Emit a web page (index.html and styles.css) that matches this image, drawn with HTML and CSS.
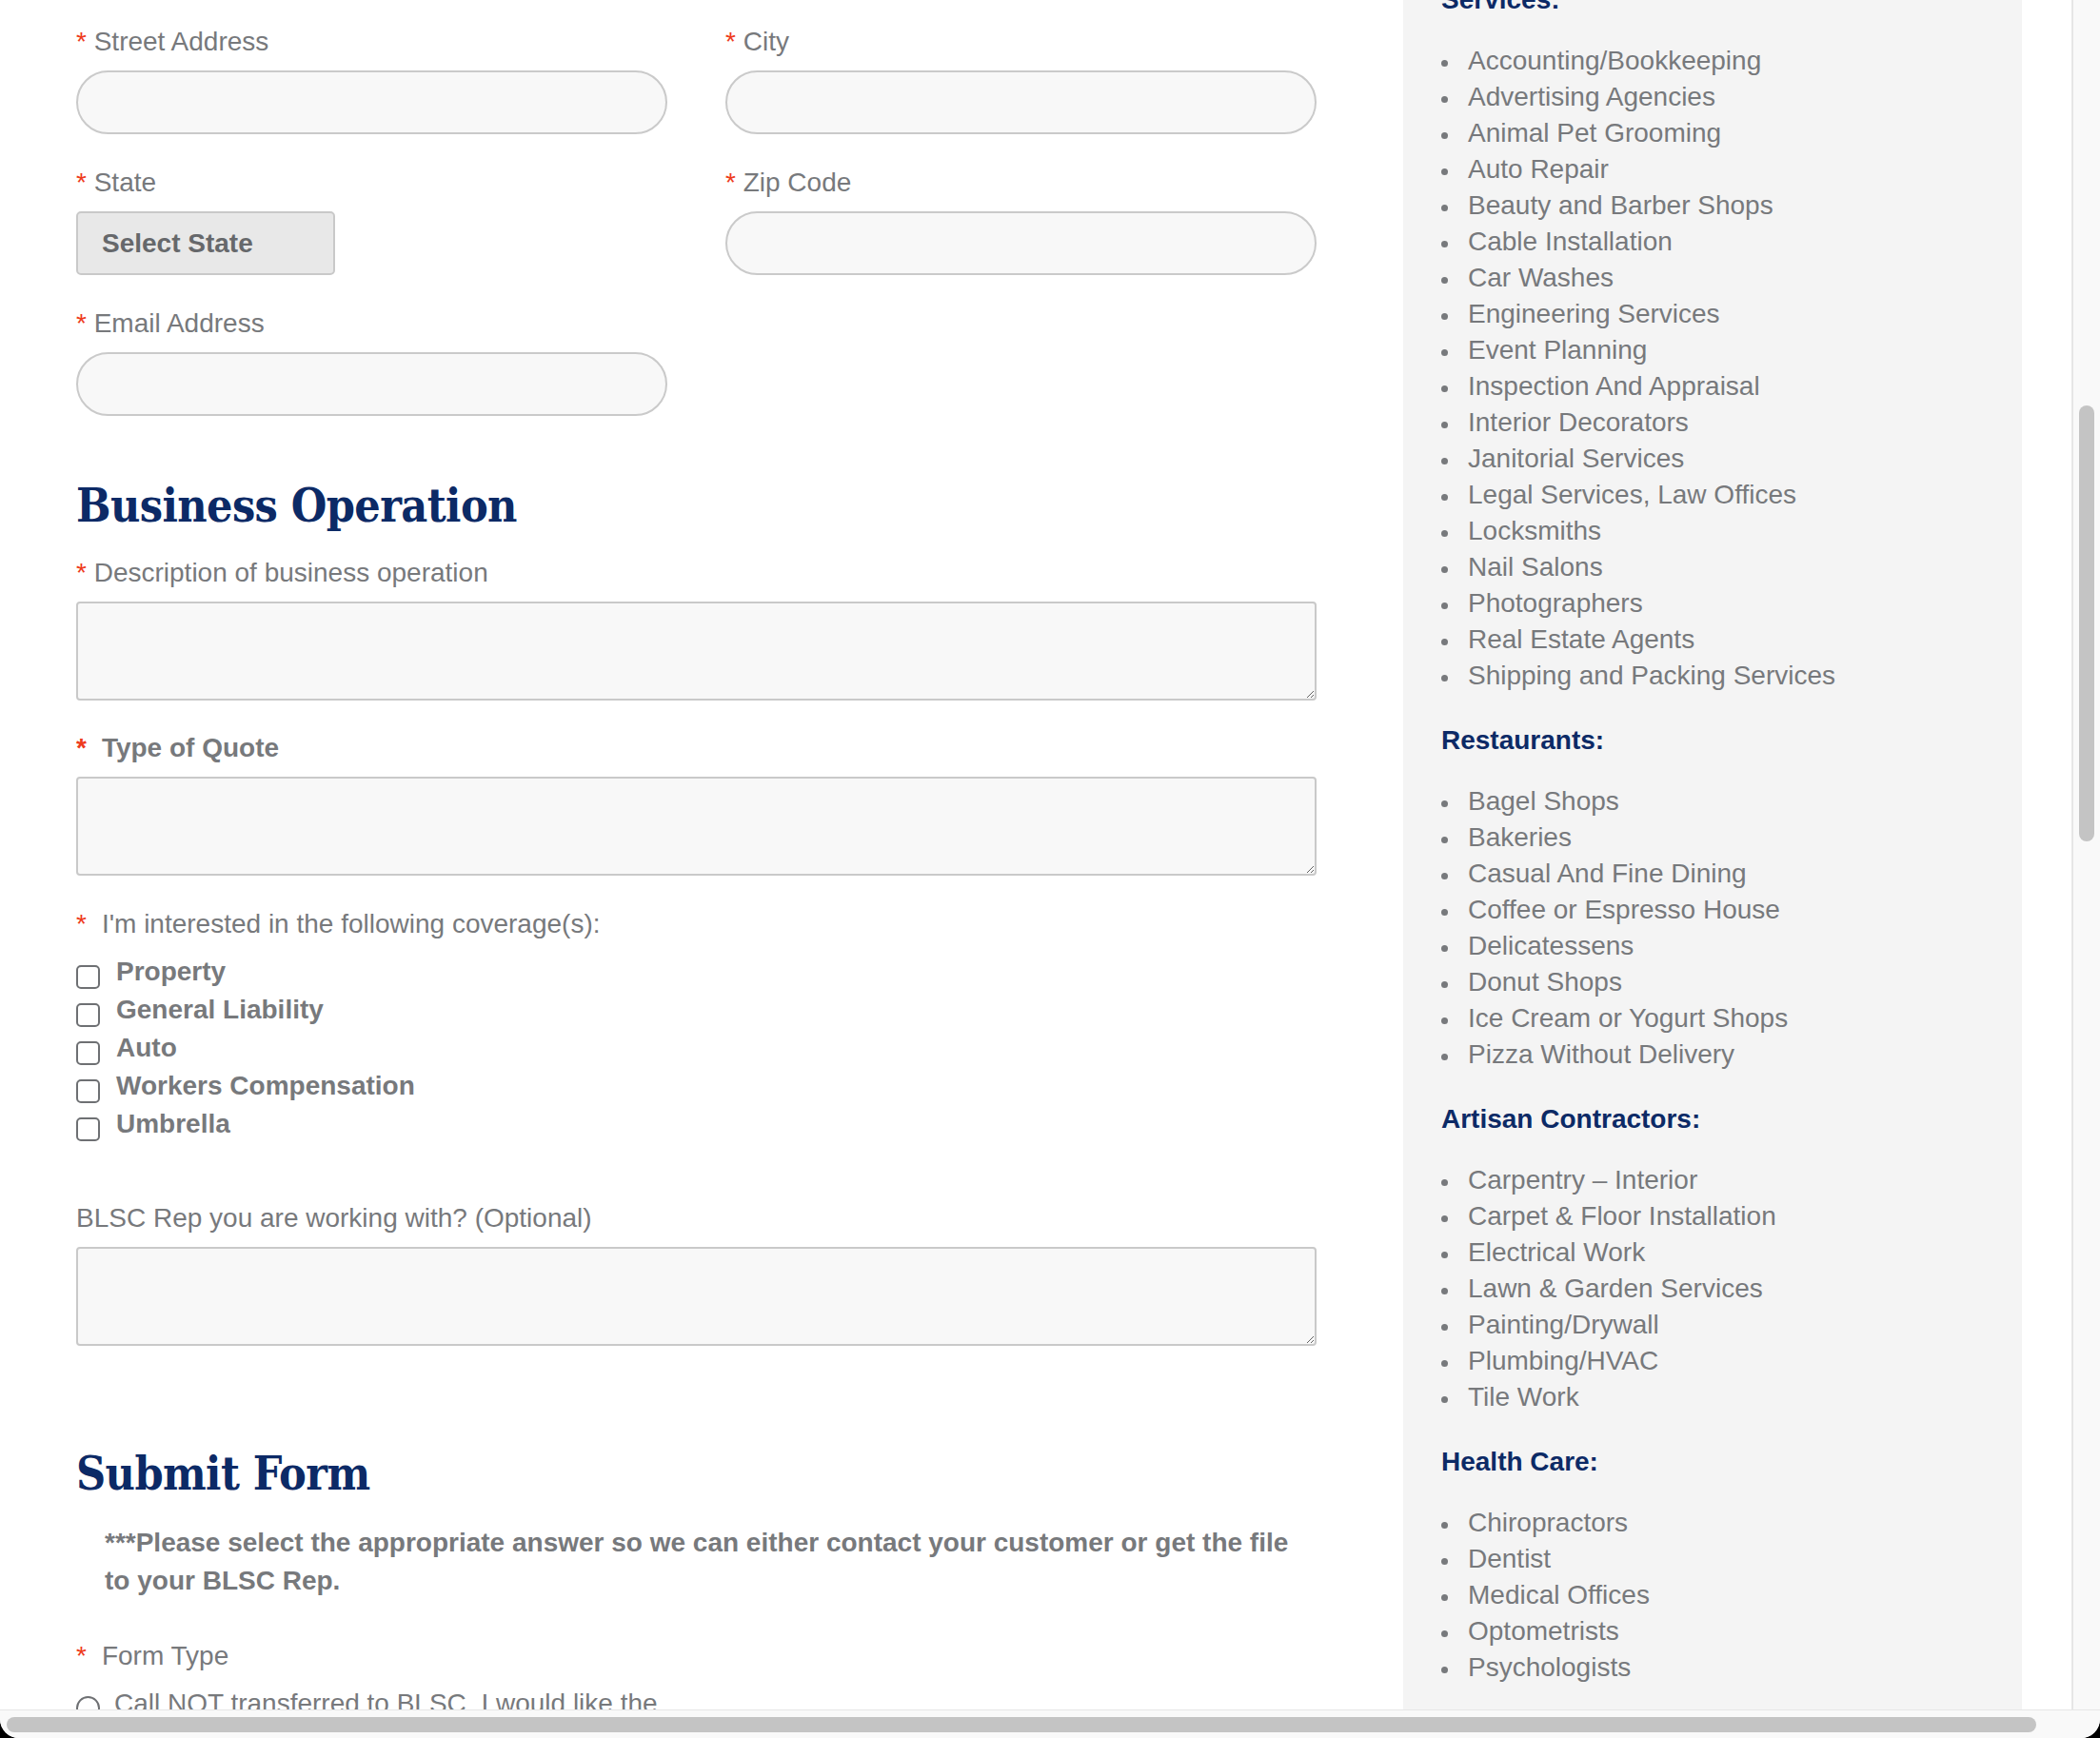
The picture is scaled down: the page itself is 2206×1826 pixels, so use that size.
FILE: index.html
```html
<!DOCTYPE html>
<html lang="en">
<head>
<meta charset="utf-8">
<title>Business Quote Form</title>
<link rel="stylesheet" href="styles.css">
</head>
<body>
<div class="window">
  <div class="viewport">
    <div class="page">
      <main class="form-col">
        <div class="row two">
          <div class="field">
            <label class="lbl"><span class="req">*</span> Street Address</label>
            <input class="pill" type="text">
          </div>
          <div class="field">
            <label class="lbl"><span class="req">*</span> City</label>
            <input class="pill" type="text">
          </div>
        </div>
        <div class="row two">
          <div class="field">
            <label class="lbl"><span class="req">*</span> State</label>
            <select class="state-select"><option>Select State</option></select>
          </div>
          <div class="field">
            <label class="lbl"><span class="req">*</span> Zip Code</label>
            <input class="pill" type="text">
          </div>
        </div>
        <div class="row two last">
          <div class="field">
            <label class="lbl"><span class="req">*</span> Email Address</label>
            <input class="pill" type="email">
          </div>
        </div>

        <h2 class="section-title first">Business Operation</h2>

        <div class="row field tight">
          <label class="lbl"><span class="req">*</span> Description of business operation</label>
          <textarea class="box"></textarea>
        </div>
        <div class="row field">
          <label class="lbl strong"><span class="req wide">*</span>Type of Quote</label>
          <textarea class="box"></textarea>
        </div>
        <div class="row field coverage">
          <span class="lbl"><span class="req wide">*</span>I'm interested in the following coverage(s):</span>
          <div class="checks">
            <label class="check"><input type="checkbox"><span>Property</span></label>
            <label class="check"><input type="checkbox"><span>General Liability</span></label>
            <label class="check"><input type="checkbox"><span>Auto</span></label>
            <label class="check"><input type="checkbox"><span>Workers Compensation</span></label>
            <label class="check"><input type="checkbox"><span>Umbrella</span></label>
          </div>
        </div>
        <div class="row field last">
          <label class="lbl">BLSC Rep you are working with? (Optional)</label>
          <textarea class="box"></textarea>
        </div>

        <h2 class="section-title second">Submit Form</h2>
        <p class="note">***Please select the appropriate answer so we can either contact your customer or get the file to your BLSC Rep.</p>

        <div class="field">
          <span class="lbl"><span class="req wide">*</span>Form Type</span>
          <label class="radio"><input type="radio" name="formtype"><span>Call NOT transferred to BLSC. I would like the</span></label>
        </div>
      </main>

      <aside class="sidebar">
        <div class="sidebar-inner">
          <h4 class="cat">Services:</h4>
          <ul class="cat-list">
            <li>Accounting/Bookkeeping</li>
            <li>Advertising Agencies</li>
            <li>Animal Pet Grooming</li>
            <li>Auto Repair</li>
            <li>Beauty and Barber Shops</li>
            <li>Cable Installation</li>
            <li>Car Washes</li>
            <li>Engineering Services</li>
            <li>Event Planning</li>
            <li>Inspection And Appraisal</li>
            <li>Interior Decorators</li>
            <li>Janitorial Services</li>
            <li>Legal Services, Law Offices</li>
            <li>Locksmiths</li>
            <li>Nail Salons</li>
            <li>Photographers</li>
            <li>Real Estate Agents</li>
            <li>Shipping and Packing Services</li>
          </ul>
          <h4 class="cat">Restaurants:</h4>
          <ul class="cat-list">
            <li>Bagel Shops</li>
            <li>Bakeries</li>
            <li>Casual And Fine Dining</li>
            <li>Coffee or Espresso House</li>
            <li>Delicatessens</li>
            <li>Donut Shops</li>
            <li>Ice Cream or Yogurt Shops</li>
            <li>Pizza Without Delivery</li>
          </ul>
          <h4 class="cat">Artisan Contractors:</h4>
          <ul class="cat-list">
            <li>Carpentry – Interior</li>
            <li>Carpet &amp; Floor Installation</li>
            <li>Electrical Work</li>
            <li>Lawn &amp; Garden Services</li>
            <li>Painting/Drywall</li>
            <li>Plumbing/HVAC</li>
            <li>Tile Work</li>
          </ul>
          <h4 class="cat">Health Care:</h4>
          <ul class="cat-list">
            <li>Chiropractors</li>
            <li>Dentist</li>
            <li>Medical Offices</li>
            <li>Optometrists</li>
            <li>Psychologists</li>
          </ul>
        </div>
      </aside>
    </div>
  </div>
  <div class="vscroll"><div class="vthumb"></div></div>
  <div class="hscroll"><div class="hthumb"></div></div>
</div>
</body>
</html>
```

FILE: styles.css
```css
* { box-sizing: border-box; }

html, body {
  margin: 0;
  padding: 0;
  background: #000;
}

body {
  font-family: "Liberation Sans", Arial, Helvetica, sans-serif;
  color: #77797c;
}

.window {
  width: 2206px;
  height: 1826px;
  background: #fff;
  border-radius: 0 0 20px 20px;
  overflow: hidden;
  display: grid;
  grid-template-columns: 2176px 30px;
  grid-template-rows: 1796px 30px;
}

.viewport {
  grid-column: 1;
  grid-row: 1;
  overflow: hidden;
  background: #fff;
}

.page {
  display: flex;
  align-items: stretch;
  gap: 91px;
  padding-left: 80px;
  min-height: 1796px;
}

/* ---------- form column ---------- */
.form-col {
  width: 1303px;
  flex: none;
  padding-top: 24px;
}

.row { margin-bottom: 31px; }
.row.last { margin-bottom: 0; }
.row.tight { margin-bottom: 30px; }

.two {
  display: grid;
  grid-template-columns: 621px 621px;
  column-gap: 61px;
}

.field {
  display: flex;
  flex-direction: column;
}

.lbl {
  display: block;
  font-size: 28px;
  line-height: 40px;
  color: #77797c;
  margin-bottom: 10px;
  white-space: nowrap;
}

.lbl.strong { font-weight: bold; }

.req {
  color: #ee3b1c;
}

.req.wide {
  display: inline-block;
  margin-right: 16px;
}

.pill {
  display: block;
  width: 100%;
  height: 67px;
  border: 2px solid #cacaca;
  border-radius: 34px;
  background: #f8f8f8;
  font-family: inherit;
  font-size: 28px;
  padding: 0 28px;
  outline: none;
}

.state-select {
  -webkit-appearance: none;
  appearance: none;
  width: 272px;
  height: 67px;
  border: 2px solid #c9c9c9;
  border-radius: 5px;
  background: #e8e8e8;
  font-family: inherit;
  font-size: 28px;
  font-weight: bold;
  color: #66686b;
  padding: 0 0 0 25px;
  outline: none;
}

.box {
  display: block;
  width: 100%;
  height: 104px;
  border: 2px solid #c9c9c9;
  border-radius: 4px;
  background: #f8f8f8;
  font-family: inherit;
  font-size: 28px;
  outline: none;
  resize: vertical;
}

.section-title {
  font-family: "DejaVu Serif", "Liberation Serif", serif;
  font-weight: bold;
  font-stretch: condensed;
  font-size: 48px;
  line-height: 60px;
  letter-spacing: -0.6px;
  color: #0c2a66;
  margin: 0;
}

.section-title.first { margin-top: 64px; margin-bottom: 21px; }
.section-title.second { margin-top: 104px; margin-bottom: 23px; }

.coverage { margin-bottom: 59px; }

.checks {
  display: flex;
  flex-direction: column;
}

.check {
  display: flex;
  align-items: flex-start;
  height: 40px;
  font-size: 28px;
  line-height: 40px;
  font-weight: bold;
  color: #77797c;
}

.check input {
  -webkit-appearance: none;
  appearance: none;
  flex: none;
  width: 25px;
  height: 25px;
  margin: 13px 17px 0 0;
  border: 2px solid #6e7073;
  border-radius: 5px;
  background: #fff;
}

.note {
  margin: 0 0 39px 0;
  padding: 0 0 0 30px;
  font-size: 28px;
  line-height: 40px;
  font-weight: bold;
  color: #77797c;
}

.radio {
  display: flex;
  align-items: flex-start;
  height: 40px;
  font-size: 28px;
  line-height: 40px;
  color: #77797c;
}

.radio input {
  -webkit-appearance: none;
  appearance: none;
  flex: none;
  width: 25px;
  height: 25px;
  margin: 12px 15px 0 0;
  border: 2px solid #6e7073;
  border-radius: 50%;
  background: #fff;
}

/* ---------- sidebar ---------- */
.sidebar {
  width: 650px;
  flex: none;
  background: #f4f4f4;
  padding: 0 40px;
}

.sidebar-inner {
  margin-top: -19px;
}

.cat {
  margin: 0;
  font-size: 28px;
  line-height: 38px;
  font-weight: bold;
  color: #0c2a66;
}

.cat-list {
  list-style: none;
  margin: 26px 0 30px 0;
  padding: 0 0 0 28px;
}

.cat-list li {
  font-size: 28px;
  line-height: 38px;
  color: #77797c;
}

.cat-list li::before {
  content: "";
  display: inline-block;
  width: 7px;
  height: 7px;
  border-radius: 50%;
  background: #77797c;
  margin-left: -28px;
  margin-right: 21px;
  vertical-align: 3.5px;
}

/* ---------- scrollbars ---------- */
.vscroll {
  grid-column: 2;
  grid-row: 1;
  border-left: 2px solid #e6e6e6;
  background: #f9f9f9;
  padding: 426px 0 0 6px;
}

.vthumb {
  width: 16px;
  height: 458px;
  border-radius: 8px;
  background: #c4c4c4;
}

.hscroll {
  grid-column: 1 / 3;
  grid-row: 2;
  border-top: 1px solid #e6e6e6;
  background: #f9f9f9;
  padding: 7px 0 0 7px;
}

.hthumb {
  width: 2132px;
  height: 16px;
  border-radius: 8px;
  background: #c4c4c4;
}
```
